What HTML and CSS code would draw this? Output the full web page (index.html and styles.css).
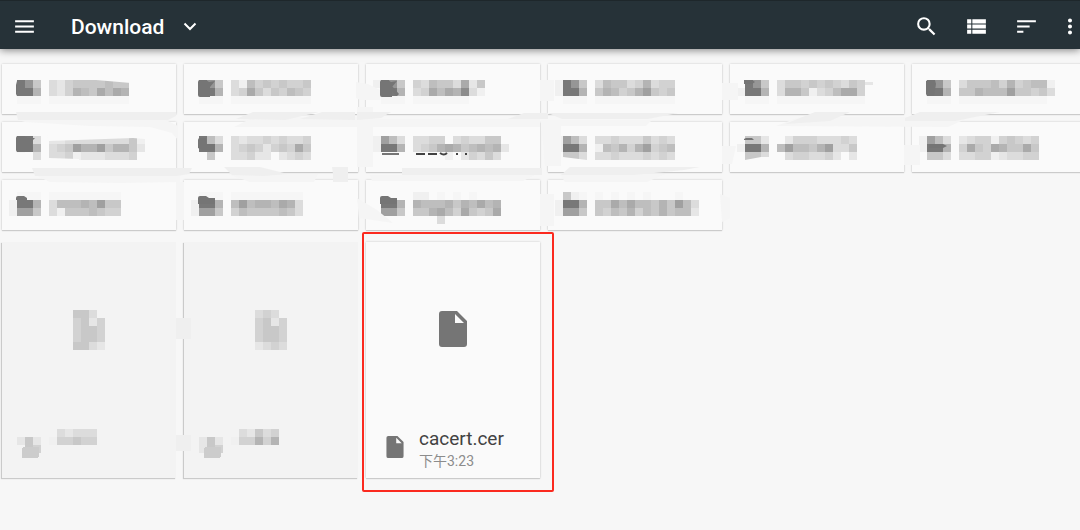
FILE: index.html
```html
<!DOCTYPE html>
<html lang="zh-CN">
<head>
    <meta charset="UTF-8">
    <meta name="viewport" content="width=device-width, initial-scale=1.0">
    <title>Download</title>
    <link rel="stylesheet" href="styles.css">
</head>
<body>
    <header class="toolbar">
        <button type="button" class="icon-btn" aria-label="Menu">
            <svg width="25" height="25" viewBox="0 0 24 24"><path d="M3 18h18v-2H3v2zm0-5h18v-2H3v2zm0-7v2h18V6H3z"/></svg>
        </button>
        <div class="location">
            <select class="location-select" aria-label="Folder">
                <option>Download</option>
            </select>
            <svg class="chevron" width="14" height="9" viewBox="0 0 14 9"><path d="M1.500 1.500L7 7l5.500-5.500"/></svg>
        </div>
        <div class="actions">
            <button type="button" class="icon-btn" aria-label="Search">
                <svg width="25" height="25" viewBox="0 0 24 24"><path d="M15.500 14h-.79l-.28-.27A6.471 6.471 0 0 0 16 9.500 6.500 6.500 0 1 0 9.500 16c1.610 0 3.090-.59 4.230-1.570l.27.28v.79l5 4.990L20.490 19l-4.990-5zm-6 0C7.010 14 5 11.990 5 9.500S7.010 5 9.500 5 14 7.010 14 9.500 11.990 14 9.500 14z"/></svg>
            </button>
            <button type="button" class="icon-btn" aria-label="List view">
                <svg width="25" height="25" viewBox="0 0 24 24"><path d="M3 14h4v-4H3v4zm0 5h4v-4H3v4zM3 9h4V5H3v4zm5 5h13v-4H8v4zm0 5h13v-4H8v4zM8 5v4h13V5H8z"/></svg>
            </button>
            <button type="button" class="icon-btn" aria-label="Sort">
                <svg width="25" height="25" viewBox="0 0 24 24"><path d="M3 18h6v-2H3v2zM3 6v2h18V6H3zm0 7h12v-2H3v2z"/></svg>
            </button>
            <button type="button" class="icon-btn more" aria-label="More">
                <svg width="8" height="25" viewBox="8 0 8 24"><path d="M12 8c1.100 0 2-.9 2-2s-.9-2-2-2-2 .9-2 2 .9 2 2 2zm0 2c-1.100 0-2 .9-2 2s.9 2 2 2 2-.9 2-2-.9-2-2-2zm0 6c-1.100 0-2 .9-2 2s.9 2 2 2 2-.9 2-2-.9-2-2-2z"/></svg>
            </button>
        </div>
    </header>

    <main class="content">
        <ul class="grid folders" id="folders"></ul>
        <ul class="grid files">
            <li class="card file disabled" data-file="0"></li>
            <li class="card file disabled" data-file="1"></li>
            <li class="card file selected">
                <div class="preview">
                    <svg width="28" height="36" viewBox="0 0 28 36"><path fill-rule="evenodd" d="M3 0h15l10 10v23q0 3-3 3H3q-3 0-3-3V3q0-3 3-3zm13 3v9h9z"/></svg>
                </div>
                <div class="details">
                    <svg width="18" height="22" viewBox="0 0 28 36"><path fill-rule="evenodd" d="M3 0h15l10 10v23q0 3-3 3H3q-3 0-3-3V3q0-3 3-3zm13 3v9h9z"/></svg>
                    <div class="caption">
                        <div class="name">cacert.cer</div>
                        <div class="time">下午3:23</div>
                    </div>
                </div>
            </li>
        </ul>
        <svg class="smudges" width="1080" height="440" viewBox="0 49 1080 440" aria-hidden="true">
            <g fill="#f5f5f5">
                <path d="M18 120h148l12 6v14l-6-7-22-6-60-1-65-4z"/>
                <path d="M234 127l20-10h110v10z"/>
                <path d="M356 82l12 2 12 6v10h-20l-4-2z"/>
                <path d="M300 119h240v8H310z"/>
                <path d="M357 107h16v60h-16z"/>
                <path d="M540 80h14v21h-14zM541 120h20v46h-16z"/>
                <path d="M548 120h104l-6 6h-86z"/>
                <path d="M722 83h16v17h-16zM722 146h14l-4 18h-10z"/>
                <path d="M776 126l24-9h170l-22 10z"/>
                <path d="M904 145h16v20h-16z"/>
                <path d="M35 175h145v7l-60 1-70-1z"/>
                <path d="M228 174h90l-4 8h-64z"/>
                <path d="M370 175h165l-12 6H372z"/>
                <path d="M560 174h105l-18 8h-82z"/>
                <path d="M176 182h8v38h-8zM357 198l20 12 16 13-34-5z"/>
                <path d="M540 194h14v32h-14zM720 194l10 4v20l-8 4z"/>
            </g>
            <g fill="#efefef">
                <path d="M16 112h160v4l-8 4H18z"/>
                <path d="M236 119l17-7h66l-34 8z"/>
                <path d="M300 119l22-7h33v8z"/>
                <path d="M357 112h34l-10 6-24 2z"/>
                <path d="M524 113h24v6h-40z"/>
                <path d="M548 113h130l-30 6h-86z"/>
                <path d="M785 124l30-12h35l-20 9z"/>
                <path d="M905 118l15-6h80l-45 9h-50z"/>
                <path d="M32 168h160l-3 6-12 2H35z"/>
                <path d="M224 167h36l28 7-24 2-32-1z"/>
                <path d="M332 167h16v15h-15v-8z"/>
                <path d="M402 168h140v7H402z"/>
                <path d="M570 167h130l-16 3-50 5h-73z"/>
                <path d="M176 318h15v21h-15zM176 435h15v16h-15z"/>
            </g>
        </svg>
    </main>
    <script src="script.js"></script>
</body>
</html>
```
FILE: styles.css
```css
* {
    box-sizing: border-box;
}
body {
    margin: 0;
    min-height: 100vh;
    background-color: #f7f7f7;
    font-family: Roboto, "Noto Sans CJK SC", sans-serif;
}
.toolbar {
    position: relative;
    z-index: 1;
    display: flex;
    align-items: center;
    height: 49px;
    padding: 2px 6px 0 12px;
    background-color: #263238;
    border-top: 1px solid #1e272b;
    box-shadow: 0 1px 8px rgba(0, 0, 0, 0.5);
}
.icon-btn {
    display: flex;
    padding: 0;
    border: none;
    background: none;
    cursor: pointer;
}
.icon-btn svg {
    fill: #fff;
}
.location {
    display: flex;
    align-items: center;
    margin-left: 34px;
}
.location-select {
    appearance: none;
    margin-right: -14px;
    padding: 2px 32px 0 0;
    border: none;
    background: none;
    color: #fff;
    font-family: inherit;
    font-size: 21px;
    font-weight: 500;
    line-height: 28px;
}
.chevron {
    fill: none;
    stroke: #fff;
    stroke-width: 2;
    pointer-events: none;
}
.actions {
    display: flex;
    gap: 25px;
    margin-left: auto;
}
.more {
    margin-left: 2px;
}
.content {
    position: relative;
    padding: 15px 0 40px 2px;
    overflow: hidden;
}
.grid {
    display: grid;
    grid-template-columns: repeat(6, 1fr);
    gap: 8px;
    margin: 0 -6px 12px 0;
    padding: 0;
    list-style: none;
}
.card {
    position: relative;
    background-color: #fafafa;
    box-shadow: 0 0 2px rgba(0, 0, 0, 0.2), 0 1px 1px rgba(0, 0, 0, 0.12);
}
.folder {
    height: 50px;
}
.file {
    height: 236px;
}
.disabled {
    background-color: #f3f3f3;
    box-shadow: -1px 1px 1px rgba(0, 0, 0, 0.18);
}
.mosaic {
    display: block;
}
.selected::after {
    content: "";
    position: absolute;
    z-index: 1;
    inset: -10px -14px -14px -4px;
    border: 2px solid #fb2a1f;
    border-radius: 2px;
}
.preview {
    display: flex;
    align-items: center;
    justify-content: center;
    height: 174px;
}
.preview svg,
.details svg {
    fill: #757575;
}
.details {
    display: flex;
    align-items: center;
    gap: 15px;
    height: 62px;
    padding-left: 20px;
}
.caption {
    padding-top: 4px;
}
.name {
    color: #424242;
    font-size: 19px;
    line-height: 24px;
}
.time {
    color: #8c8c8c;
    font-size: 14px;
    line-height: 20px;
}
.smudges {
    position: absolute;
    top: 0;
    left: 0;
    pointer-events: none;
}
```
FILE: script.js
```js
const CELL = 8;

// Each digit is a grey level, a dot is an empty cell
const iconRows = [
    ['.da5', '.dd7', '.000'],
    ['1963', '1dd7', '.553'],
    ['.000', '1dd7', '1995']
];

// Left over pieces of the folder icon
const folderTop = 'M16 16h6l3 2 6-1-5 6v10H16q-2 0-2-2V18q0-2 2-2z';
const folderMid = 'M16 14h6l3 2h8l-4 4 2 6-2 4H16q-2 0-2-2V16q0-2 2-2z';
const folderLow = 'M14 18q0-2 2-2h6l3 2h6v6H14z';

const folders = [
    { rows: ['3245555655', '3247658687', '0000000000'], mark: 'M15 17v15l-1-2v-9z', cover: 'M63 16h31l35 3v-3z' },
    { rows: ['3164545445', '3485354654', '0000000000'], mark: folderTop },
    { rows: ['436553825', '348687b31', '0000000'], icon: ['1da5', '.dd7', '.000'], mark: folderTop + 'M26 22l7 8-2 2-6-6z' },
    { rows: ['3655347344', '5764579545', '0000000000'], icon: ['1da5', '1dd7', '.000'] },
    { rows: ['355454543542', '37751346884.', '00000000000.'], icon: ['.da5', '1dd7', '.000'], mark: 'M14 16h8l3 2-3 2h-8z', cover: 'M135 15h10v3h-10zM135 21h10v3h-10z' },
    { rows: ['355564745661', '557666955453', '00000000000.'], mark: 'M14 17l2-1h7l1 4-2 12h-7l-1-2z' },
    { rows: ['223333333351', '345977957752', '33412223334.'], icon: ['.dd3', '.dd7', '.0.3'], mark: folderMid, cover: 'M45 13h98v4l-12-1-84 3zM15 31h16v8H15zM47 36l30 1v2H47z' },
    { rows: ['3233434334', '3454245485', '33422.2343'], icon: ['.d63', '.dd7', '..5.'], mark: 'M16 16h6v6h9v6H18l-4-2v-8q0-2 2-2z' },
    { rows: ['3344.343355.', '345787567672', '....1.24353.'], icon: ['1963', '1dd7', '....'], mark: 'M16 31h17v2H16z', ink: 'M50 32h9M62 32h9M74 31q4 3 7 0M90 32h2M99 32h2' },
    { rows: ['3343335343', '1657479456', '3343334343'], cover: 'M15 35l24 3v2H15z' },
    { rows: ['.244433343', '6966579335', '.3443342.2'], icon: ['.552', '1dd7', '.553'], mark: 'M14 17l2-1h6l2 2H14z', cover: 'M15 38l16-3h8v5H15z' },
    { rows: ['2344145434', '4854875585', '3344123344'], mark: 'M17 22h14l4 2-4 2H17z' },
    { rows: ['000000000', '366676955', '315556544'], mark: 'M14 18q0-2 2-2h6l3 2v2H14z' },
    { rows: ['000000000', '696776873', '465555653'], mark: folderLow },
    { rows: ['11.0.0.0...', '76667576867', '55786485458', '...3.......'], icon: ['....', '.dd7', '.995'], mark: folderLow },
    { rows: ['0.0.0.0...0..', '5586866575963', '5465746575662'], icon: ['.510', '1dd7', '1995'] }
];

const files = [
    [
        [71, 68, ['553.', '4524', '4554', '4554', '5532']],
        [15, 195, ['252', '.54']],
        [47, 187, ['.32333', '144544']]
    ],
    [
        [71, 68, ['343.', '4524', '4554', '4554', '2343']],
        [15, 195, ['252', '254']],
        [47, 187, ['.32534', '144747']]
    ]
];

function drawCells(x, y, rows) {
    let out = '';
    rows.forEach((row, r) => {
        [...row].forEach((level, c) => {
            if (level === '.') return;
            const grey = level === '0' ? 246 : 250 - parseInt(level, 16) * 10;
            out += `<rect x="${x + c * CELL}" y="${y + r * CELL}" width="${CELL}" height="${CELL}" fill="rgb(${grey},${grey},${grey})"/>`;
        });
    });
    return out;
}

function drawMosaic(height, body) {
    return `<svg class="mosaic" width="174" height="${height}" viewBox="0 0 174 ${height}" shape-rendering="crispEdges" aria-hidden="true">${body}</svg>`;
}

const folderList = document.getElementById('folders');
folders.forEach((folder, i) => {
    const line = Math.floor(i / 6);
    const top = 16 - line * 2;
    const card = document.createElement('li');
    card.className = 'card folder';
    card.innerHTML = drawMosaic(50,
        drawCells(7, top, folder.icon || iconRows[line]) +
        drawCells(47, top, folder.rows) +
        `<path d="${folder.mark || ''}" fill="#757575" shape-rendering="auto"/>` +
        `<path d="${folder.cover || ''}" fill="#fafafa" shape-rendering="auto"/>` +
        `<path d="${folder.ink || ''}" fill="none" stroke="#424242" stroke-width="2" shape-rendering="auto"/>`);
    folderList.appendChild(card);
});

document.querySelectorAll('[data-file]').forEach(card => {
    const blocks = files[card.dataset.file];
    card.innerHTML = drawMosaic(236,
        blocks.map(([x, y, rows]) => drawCells(x, y, rows)).join('') +
        '<rect x="20" y="205" width="17" height="11" rx="2" fill="#cccccc"/>');
});
```
